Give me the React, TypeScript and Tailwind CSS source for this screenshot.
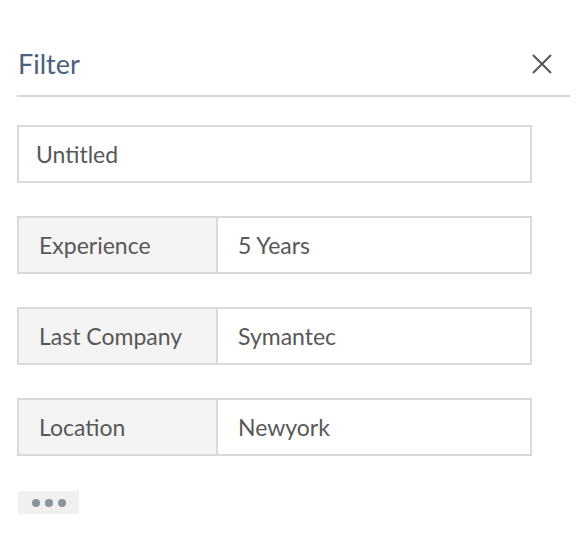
import React from "react";

const rows = [
    { label: "Experience", value: "5 Years" },
    { label: "Last Company", value: "Symantec" },
    { label: "Location", value: "Newyork" },
];

const App: React.FC = () => {
    return (
        <div
            className="w-[580px] h-[554px] bg-white pt-[40px]"
            style={{ fontFamily: "Lato, 'Noto Sans', sans-serif" }}
        >
            {/* Header */}
            <div className="ml-[17px] mr-[10px] flex items-center justify-between h-[57px] border-b-2 border-[#d6d6d6]">
                <h1 className="text-[27px] text-[#4c617c] ml-px pb-[7px]">Filter</h1>
                <button className="mr-[17px] mb-[7px] text-[#555555]" aria-label="Close">
                    <svg width="22" height="22" viewBox="0 0 22 22" fill="none" stroke="currentColor" strokeWidth="2">
                        <path d="M2 2L20 20M20 2L2 20" />
                    </svg>
                </button>
            </div>

            <div className="ml-[17px] w-[515px] mt-[28px] flex flex-col gap-[33px]">
                <div className="h-[58px] border-2 border-[#dadada] flex items-center px-[17px] text-[23px] text-[#585858]">
                    Untitled
                </div>
                {rows.map((row) => (
                    <div key={row.label} className="h-[58px] border-2 border-[#dadada] flex text-[23px] text-[#585858]">
                        <div className="w-[199px] bg-[#f4f4f4] border-r-2 border-[#dadada] flex items-center pl-[20px]">
                            {row.label}
                        </div>
                        <div className="flex-1 flex items-center pl-[20px]">{row.value}</div>
                    </div>
                ))}
            </div>

            <div className="ml-[18px] mt-[35px] w-[61px] h-[23px] bg-[#f0f0f0] flex items-center justify-center gap-[5px]">
                <span className="w-[8px] h-[8px] rounded-full bg-[#8a959a]" />
                <span className="w-[8px] h-[8px] rounded-full bg-[#8a959a]" />
                <span className="w-[8px] h-[8px] rounded-full bg-[#8a959a]" />
            </div>
        </div>
    );
};

export default App;
